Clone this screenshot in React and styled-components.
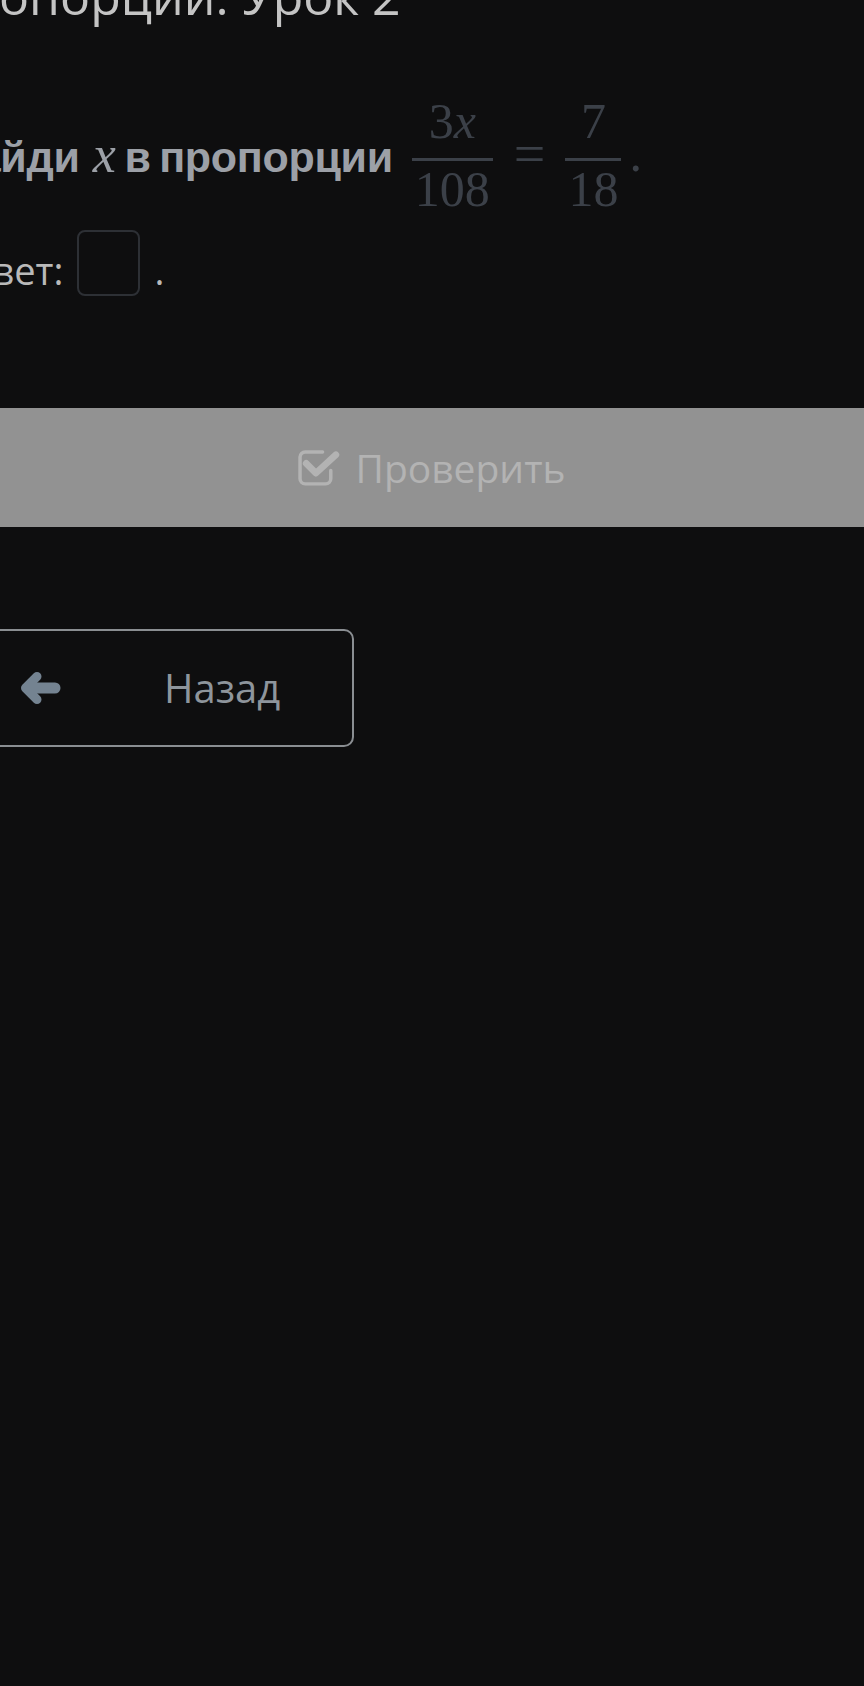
import React from "react";
import styled, { createGlobalStyle } from "styled-components";

const Global = createGlobalStyle`
  html, body { margin: 0; padding: 0; background: #0e0e0f; }
  body { overflow-x: hidden; min-height: 1686px; font-family: "Open Sans", sans-serif; }
  * { box-sizing: border-box; }
`;

const Page = styled.div`
  display: flex;
  flex-direction: column;
  width: 100%;
`;

const Content = styled.div`
  display: flex;
  flex-direction: column;
  margin-left: -55px;
`;

const Title = styled.h1`
  margin: -34px 0 0 -13px;
  font: 400 50px/60px "Open Sans", sans-serif;
  color: #c4c4c4;
  white-space: nowrap;
`;

const QuestionRow = styled.div`
  display: flex;
  align-items: flex-start;
  margin-top: 70px;
  white-space: nowrap;
`;

const Prompt = styled.span`
  margin: 35px 0 0 1px;
  font: 700 43px/52px "Liberation Sans", Arial, sans-serif;
  color: #9ca0a7;
  letter-spacing: -0.3px;
  word-spacing: -3px;
`;

const MathX = styled.i`
  font-family: "Liberation Serif", serif;
  font-size: 52px;
  line-height: 40px;
  font-weight: 400;
  font-style: italic;
  margin: 0 9px 0 13px;
`;

const Fraction = styled.span`
  display: inline-flex;
  flex-direction: column;
  align-items: center;
  margin-left: ${(p) => p.$ml || 0}px;
  color: #3b4048;
  font: 400 50px/50px "Liberation Serif", serif;
`;

const Num = styled.span`
  padding: 0 3px 12px;
`;

const Bar = styled.span`
  align-self: stretch;
  height: 3px;
  background: #3b4048;
`;

const Den = styled.span`
  padding: 3px 3px 0;
`;

const Sym = styled.span`
  margin-top: 33px;
  margin-left: ${(p) => p.$ml || 0}px;
  margin-right: ${(p) => p.$mr || 0}px;
  color: #3b4048;
  font: 400 ${(p) => p.$size || 50}px/50px "Liberation Serif", serif;
`;

const AnswerRow = styled.div`
  display: flex;
  align-items: flex-start;
  margin-top: 16px;
`;

const AnswerLabel = styled.span`
  margin-top: 17px;
  font: 400 38px/46px "Open Sans", sans-serif;
  color: #b9b9b9;
  white-space: nowrap;
`;

const AnswerBox = styled.div`
  width: 63px;
  height: 66px;
  margin-left: 14px;
  border: 2px solid #2d3035;
  border-radius: 8px;
`;

const AnswerDot = styled(AnswerLabel)`
  margin-left: 14px;
`;

const CheckBar = styled.div`
  display: flex;
  align-items: center;
  justify-content: center;
  gap: 15px;
  margin-top: 112px;
  height: 119px;
  background: #929292;
  color: #b3b3b3;
  font: 400 39px/48px "Open Sans", sans-serif;
`;

const BackRow = styled.div`
  display: flex;
  margin-top: 102px;
  margin-left: -55px;
`;

const BackButton = styled.button`
  display: flex;
  align-items: center;
  width: 409px;
  height: 118px;
  padding: 0 0 0 73px;
  background: transparent;
  border: 2px solid #8a8e92;
  border-radius: 10px;
  color: #8e959c;
  font: 400 40px/48px "Open Sans", sans-serif;
`;

const BackLabel = styled.span`
  margin-left: 103px;
`;

const CheckIcon = () => (
  <svg width="42" height="36" viewBox="0 0 41 35" fill="none">
    <path
      d="M24 1.8 H7 a5 5 0 0 0 -5 5 V28 a5 5 0 0 0 5 5 H27 a5 5 0 0 0 5 -5 V20"
      stroke="currentColor"
      strokeWidth="3.4"
      strokeLinecap="round"
    />
    <path
      d="M8 13 L17.5 22.5 L37 4.5"
      stroke="currentColor"
      strokeWidth="6.5"
      strokeLinecap="round"
      strokeLinejoin="round"
    />
  </svg>
);

const ArrowIcon = () => (
  <svg width="41" height="34" viewBox="0 0 41 34" fill="none">
    <path
      d="M17 5.5 L5.5 17 L17 28.5"
      stroke="#748391"
      strokeWidth="9"
      strokeLinecap="round"
      strokeLinejoin="round"
    />
    <path d="M8 17 H35" stroke="#748391" strokeWidth="11" strokeLinecap="round" />
  </svg>
);

export default function App() {
  return (
    <Page>
      <Global />
      <Content>
        <Title>Пропорции. Урок 2</Title>
        <QuestionRow>
          <Prompt>
            Найди<MathX>x</MathX>в пропорции
          </Prompt>
          <Fraction $ml={19}>
            <Num>
              3<i>x</i>
            </Num>
            <Bar />
            <Den>108</Den>
          </Fraction>
          <Sym $ml={21} $mr={20} $size={56}>=</Sym>
          <Fraction>
            <Num>7</Num>
            <Bar />
            <Den>18</Den>
          </Fraction>
          <Sym $ml={8}>.</Sym>
        </QuestionRow>
        <AnswerRow>
          <AnswerLabel>Ответ:</AnswerLabel>
          <AnswerBox />
          <AnswerDot>.</AnswerDot>
        </AnswerRow>
      </Content>
      <CheckBar>
        <CheckIcon />
        <span>Проверить</span>
      </CheckBar>
      <BackRow>
        <BackButton>
          <ArrowIcon />
          <BackLabel>Назад</BackLabel>
        </BackButton>
      </BackRow>
    </Page>
  );
}
